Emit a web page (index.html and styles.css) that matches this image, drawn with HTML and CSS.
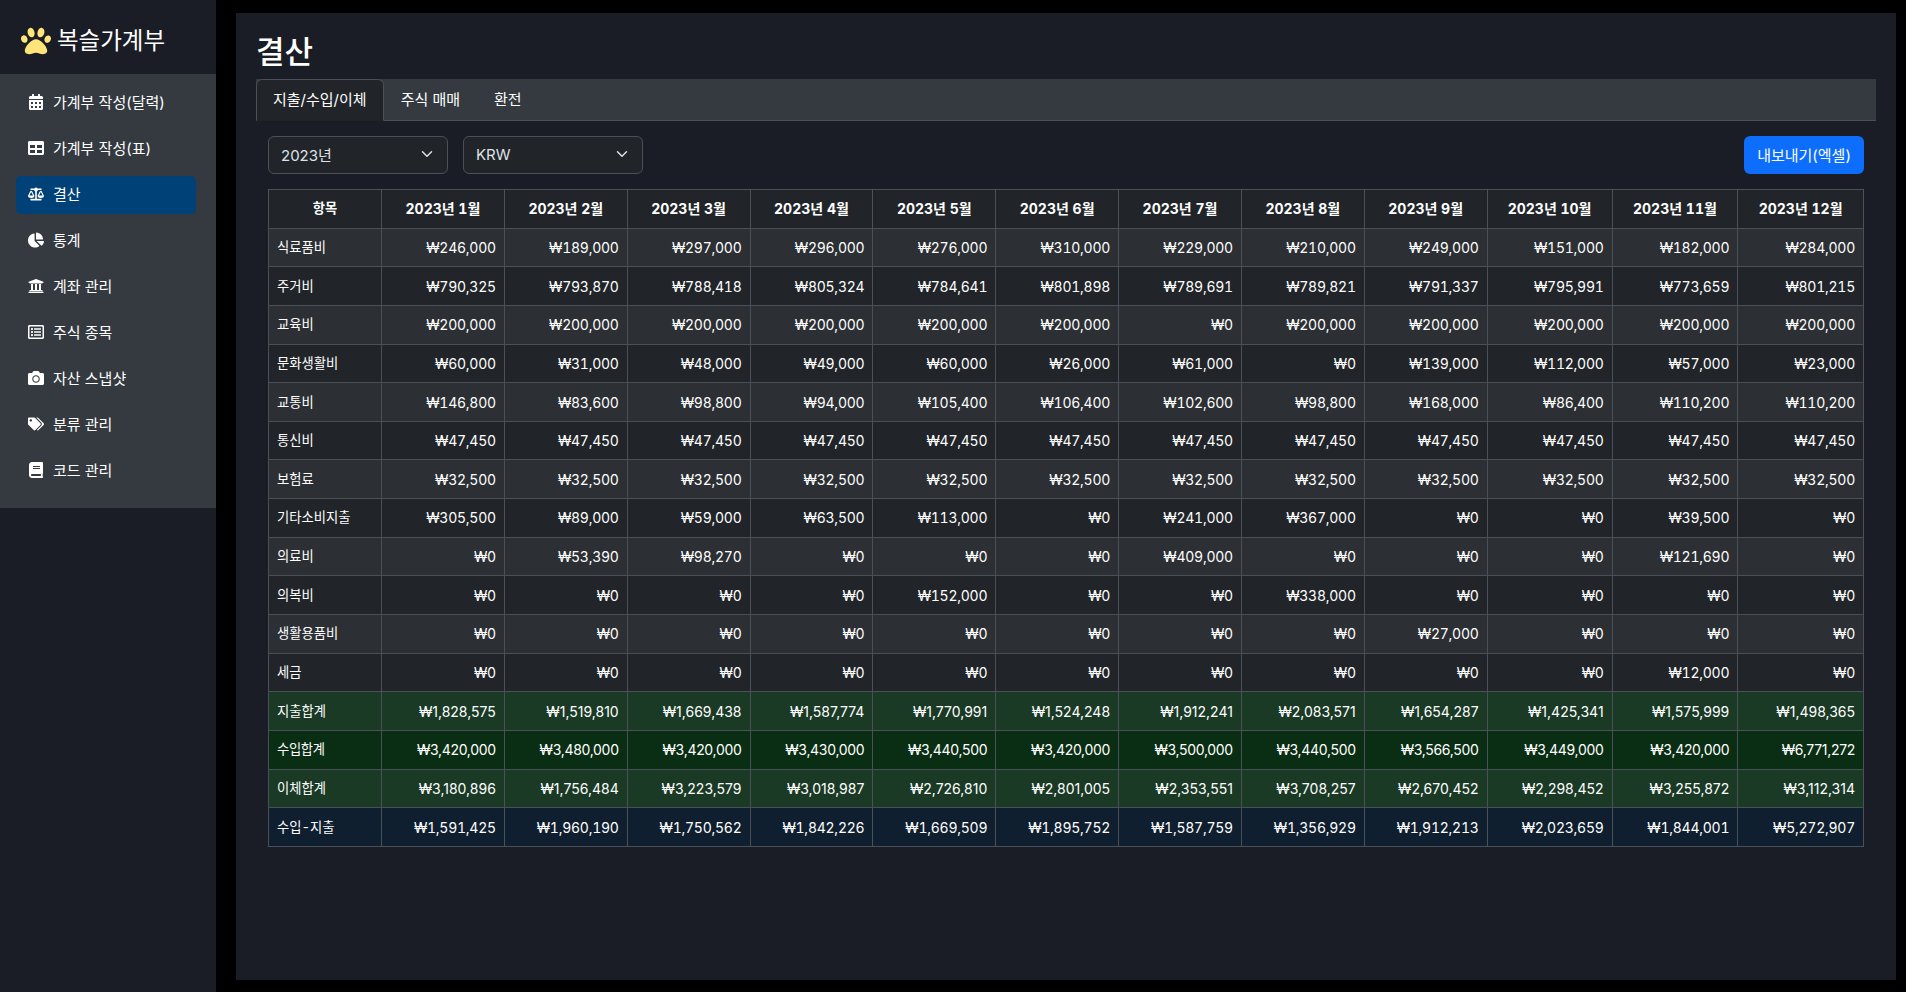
FILE: index.html
```html
<!DOCTYPE html>
<html lang="ko">
<head>
<meta charset="utf-8">
<title>복슬가계부 - 결산</title>
<link rel="stylesheet" href="styles.css">
</head>
<body>
<aside class="sidebar">
  <div class="brand">
    <svg class="paw" viewBox="0 0 512 512"><path d="M256 224c-79.41 0-192 122.76-192 200.25 0 34.9 26.81 55.75 71.74 55.75 48.84 0 81.09-25.08 120.26-25.08 39.51 0 71.85 25.08 120.26 25.08 44.93 0 71.74-20.85 71.74-55.75C448 346.76 335.41 224 256 224zm-147.28-12.61c-10.4-34.65-42.44-57.09-71.56-50.13-29.12 6.96-44.29 40.69-33.89 75.34 10.4 34.65 42.44 57.09 71.56 50.13 29.12-6.96 44.29-40.69 33.89-75.34zm84.72-20.78c30.94-8.14 46.42-49.94 34.58-93.36s-46.52-72.01-77.46-63.87-46.42 49.94-34.58 93.36c11.84 43.42 46.52 72.02 77.46 63.87zm281.39-29.34c-29.12-6.96-61.15 15.48-71.56 50.13-10.4 34.65 4.77 68.38 33.89 75.34 29.12 6.96 61.15-15.48 71.56-50.13 10.4-34.65-4.77-68.38-33.89-75.34zm-156.27 29.34c30.94 8.14 65.62-20.45 77.46-63.87 11.84-43.42-3.64-85.21-34.58-93.36s-65.62 20.45-77.46 63.87c-11.84 43.42 3.64 85.22 34.58 93.36z"/></svg>
    <span>복슬가계부</span>
  </div>
  <nav class="menu">
    <a class="menu-item"><span class="ico"><svg viewBox="0 0 448 512"><path d="M0 464c0 26.5 21.5 48 48 48h352c26.5 0 48-21.5 48-48V192H0v272zm320-196c0-6.6 5.4-12 12-12h40c6.6 0 12 5.4 12 12v40c0 6.6-5.4 12-12 12h-40c-6.6 0-12-5.4-12-12v-40zm0 128c0-6.6 5.4-12 12-12h40c6.6 0 12 5.4 12 12v40c0 6.6-5.4 12-12 12h-40c-6.6 0-12-5.4-12-12v-40zM192 268c0-6.6 5.4-12 12-12h40c6.6 0 12 5.4 12 12v40c0 6.6-5.4 12-12 12h-40c-6.6 0-12-5.4-12-12v-40zm0 128c0-6.6 5.4-12 12-12h40c6.6 0 12 5.4 12 12v40c0 6.6-5.4 12-12 12h-40c-6.6 0-12-5.4-12-12v-40zM64 268c0-6.6 5.4-12 12-12h40c6.6 0 12 5.4 12 12v40c0 6.6-5.4 12-12 12H76c-6.6 0-12-5.4-12-12v-40zm0 128c0-6.6 5.4-12 12-12h40c6.6 0 12 5.4 12 12v40c0 6.6-5.4 12-12 12H76c-6.6 0-12-5.4-12-12v-40zM400 64h-48V16c0-8.8-7.2-16-16-16h-32c-8.8 0-16 7.2-16 16v48H160V16c0-8.8-7.2-16-16-16h-32c-8.8 0-16 7.2-16 16v48H48C21.5 64 0 85.5 0 112v48h448v-48c0-26.5-21.5-48-48-48z"/></svg></span>가계부 작성(달력)</a>
    <a class="menu-item"><span class="ico"><svg viewBox="0 0 512 512"><path d="M464 32H48C21.49 32 0 53.49 0 80v352c0 26.51 21.49 48 48 48h416c26.51 0 48-21.49 48-48V80c0-26.51-21.49-48-48-48zM224 416H64v-96h160v96zm0-160H64v-96h160v96zm224 160H288v-96h160v96zm0-160H288v-96h160v96z"/></svg></span>가계부 작성(표)</a>
    <a class="menu-item active"><span class="ico"><svg viewBox="0 0 640 512"><path d="M256 336h-.02c0-16.18 1.34-8.73-85.05-181.51-17.65-35.29-68.19-35.36-85.87 0C-2.06 328.75.02 320.33.02 336H0c0 44.18 57.31 80 128 80s128-35.82 128-80zM128 176l72 144H56l72-144zm511.98 160c0-16.18 1.34-8.73-85.05-181.51-17.65-35.29-68.19-35.36-85.87 0-87.12 174.26-85.04 165.84-85.04 181.51H384c0 44.18 57.31 80 128 80s128-35.82 128-80h-.02zM440 320l72-144 72 144H440zm88 128H352V153.25c23.51-10.29 41.16-31.48 46.39-57.25H528c8.84 0 16-7.16 16-16V48c0-8.84-7.16-16-16-16H383.64C369.04 12.68 346.09 0 320 0s-49.04 12.68-63.64 32H112c-8.84 0-16 7.16-16 16v32c0 8.84 7.16 16 16 16h129.61c5.23 25.76 22.87 46.96 46.39 57.25V448H112c-8.84 0-16 7.16-16 16v32c0 8.84 7.16 16 16 16h416c8.84 0 16-7.16 16-16v-32c0-8.84-7.16-16-16-16z"/></svg></span>결산</a>
    <a class="menu-item"><span class="ico"><svg viewBox="0 0 544 512"><path d="M527.79 288H290.5l158.03 158.03c6.04 6.04 15.98 6.53 22.19.68 38.7-36.46 65.32-85.61 73.13-140.86 1.34-9.46-6.51-17.85-16.06-17.85zm-15.83-64.8C503.72 103.74 408.26 8.28 288.8.04 279.68-.59 272 7.1 272 16.24V240h223.77c9.14 0 16.82-7.68 16.19-16.8zM224 288V50.71c0-9.55-8.39-17.4-17.84-16.06C86.99 51.49-4.1 155.6.14 280.37 4.5 408.51 114.83 513.59 243.03 511.98c50.4-.63 96.97-16.87 135.26-44.03 7.9-5.6 8.42-17.23 1.57-24.08L224 288z"/></svg></span>통계</a>
    <a class="menu-item"><span class="ico"><svg viewBox="0 0 512 512"><path d="M496 128v16a8 8 0 0 1-8 8h-24v12c0 6.627-5.373 12-12 12H60c-6.627 0-12-5.373-12-12v-12H24a8 8 0 0 1-8-8v-16a8 8 0 0 1 4.941-7.392l232-88a7.996 7.996 0 0 1 6.118 0l232 88A8 8 0 0 1 496 128zm-24 304H40c-13.255 0-24 10.745-24 24v16a8 8 0 0 0 8 8h464a8 8 0 0 0 8-8v-16c0-13.255-10.745-24-24-24zM96 192v192H60c-6.627 0-12 5.373-12 12v20h416v-20c0-6.627-5.373-12-12-12h-36V192h-64v192h-64V192h-64v192h-64V192H96z"/></svg></span>계좌 관리</a>
    <a class="menu-item"><span class="ico"><svg viewBox="0 0 512 512"><path d="M464 32H48C21.49 32 0 53.49 0 80v352c0 26.51 21.49 48 48 48h416c26.51 0 48-21.49 48-48V80c0-26.51-21.49-48-48-48zm-6 400H54a6 6 0 0 1-6-6V86a6 6 0 0 1 6-6h404a6 6 0 0 1 6 6v340a6 6 0 0 1-6 6zm-42-92v24c0 6.627-5.373 12-12 12H204c-6.627 0-12-5.373-12-12v-24c0-6.627 5.373-12 12-12h200c6.627 0 12 5.373 12 12zm0-96v24c0 6.627-5.373 12-12 12H204c-6.627 0-12-5.373-12-12v-24c0-6.627 5.373-12 12-12h200c6.627 0 12 5.373 12 12zm0-96v24c0 6.627-5.373 12-12 12H204c-6.627 0-12-5.373-12-12v-24c0-6.627 5.373-12 12-12h200c6.627 0 12 5.373 12 12zm-252 12c0 19.882-16.118 36-36 36s-36-16.118-36-36 16.118-36 36-36 36 16.118 36 36zm0 96c0 19.882-16.118 36-36 36s-36-16.118-36-36 16.118-36 36-36 36 16.118 36 36zm0 96c0 19.882-16.118 36-36 36s-36-16.118-36-36 16.118-36 36-36 36 16.118 36 36z"/></svg></span>주식 종목</a>
    <a class="menu-item"><span class="ico"><svg viewBox="0 0 512 512"><path d="M512 144v288c0 26.5-21.5 48-48 48H48c-26.5 0-48-21.5-48-48V144c0-26.5 21.5-48 48-48h88l12.3-32.9c7-18.7 24.9-31.1 44.9-31.1h125.5c20 0 37.9 12.4 44.9 31.1L376 96h88c26.5 0 48 21.5 48 48zM376 288c0-66.2-53.8-120-120-120s-120 53.8-120 120 53.8 120 120 120 120-53.8 120-120zm-32 0c0 48.5-39.5 88-88 88s-88-39.5-88-88 39.5-88 88-88 88 39.5 88 88z"/></svg></span>자산 스냅샷</a>
    <a class="menu-item"><span class="ico"><svg viewBox="0 0 640 512"><path d="M497.941 225.941L286.059 14.059A48 48 0 0 0 252.118 0H48C21.49 0 0 21.49 0 48v204.118a48 48 0 0 0 14.059 33.941l211.882 211.882c18.744 18.745 49.136 18.746 67.882 0l204.118-204.118c18.745-18.745 18.745-49.137 0-67.882zM112 160c-26.51 0-48-21.49-48-48s21.49-48 48-48 48 21.49 48 48-21.49 48-48 48zm513.941 133.823L421.823 497.941c-18.745 18.745-49.137 18.745-67.882 0l-.36-.36L527.64 323.522c16.999-16.999 26.36-39.6 26.36-63.64s-9.362-46.641-26.36-63.64L331.397 0h48.721a48 48 0 0 1 33.941 14.059l211.882 211.882c18.745 18.745 18.745 49.137 0 67.882z"/></svg></span>분류 관리</a>
    <a class="menu-item"><span class="ico"><svg viewBox="0 0 448 512"><path d="M448 360V24c0-13.3-10.7-24-24-24H96C43 0 0 43 0 96v320c0 53 43 96 96 96h328c13.3 0 24-10.7 24-24v-16c0-7.5-3.5-14.3-8.9-18.7-4.2-15.4-4.2-59.3 0-74.7 5.4-4.3 8.9-11.1 8.9-18.6zM128 134c0-3.3 2.7-6 6-6h212c3.3 0 6 2.7 6 6v20c0 3.3-2.7 6-6 6H134c-3.3 0-6-2.7-6-6v-20zm0 64c0-3.3 2.7-6 6-6h212c3.3 0 6 2.7 6 6v20c0 3.3-2.7 6-6 6H134c-3.3 0-6-2.7-6-6v-20zm253.4 250H96c-17.7 0-32-14.3-32-32 0-17.6 14.4-32 32-32h285.4c-1.9 17.1-1.9 46.9 0 64z"/></svg></span>코드 관리</a>
  </nav>
</aside>
<main class="content">
  <h1 class="title">결산</h1>
  <div class="tabs">
    <a class="tab active">지출/수입/이체</a>
    <a class="tab">주식 매매</a>
    <a class="tab">환전</a>
  </div>
  <section class="panel">
    <div class="toolbar">
      <div class="select">2023년<svg class="chev" viewBox="0 0 16 16"><path d="M2 5l6 6 6-6"/></svg></div>
      <div class="select">KRW<svg class="chev" viewBox="0 0 16 16"><path d="M2 5l6 6 6-6"/></svg></div>
      <button class="export">내보내기(엑셀)</button>
    </div>
    <table class="report">
      <colgroup>
        <col class="col-label">
        <col class="col-month" span="9">
        <col class="col-oct">
        <col class="col-nov">
        <col>
      </colgroup>
      <thead>
        <tr><th>항목</th><th>2023년 1월</th><th>2023년 2월</th><th>2023년 3월</th><th>2023년 4월</th><th>2023년 5월</th><th>2023년 6월</th><th>2023년 7월</th><th>2023년 8월</th><th>2023년 9월</th><th>2023년 10월</th><th>2023년 11월</th><th>2023년 12월</th></tr>
      </thead>
      <tbody>
        <tr class="odd"><td>식료품비</td><td>₩246,000</td><td>₩189,000</td><td>₩297,000</td><td>₩296,000</td><td>₩276,000</td><td>₩310,000</td><td>₩229,000</td><td>₩210,000</td><td>₩249,000</td><td>₩151,000</td><td>₩182,000</td><td>₩284,000</td></tr>
        <tr><td>주거비</td><td>₩790,325</td><td>₩793,870</td><td>₩788,418</td><td>₩805,324</td><td>₩784,641</td><td>₩801,898</td><td>₩789,691</td><td>₩789,821</td><td>₩791,337</td><td>₩795,991</td><td>₩773,659</td><td>₩801,215</td></tr>
        <tr class="odd"><td>교육비</td><td>₩200,000</td><td>₩200,000</td><td>₩200,000</td><td>₩200,000</td><td>₩200,000</td><td>₩200,000</td><td>₩0</td><td>₩200,000</td><td>₩200,000</td><td>₩200,000</td><td>₩200,000</td><td>₩200,000</td></tr>
        <tr><td>문화생활비</td><td>₩60,000</td><td>₩31,000</td><td>₩48,000</td><td>₩49,000</td><td>₩60,000</td><td>₩26,000</td><td>₩61,000</td><td>₩0</td><td>₩139,000</td><td>₩112,000</td><td>₩57,000</td><td>₩23,000</td></tr>
        <tr class="odd"><td>교통비</td><td>₩146,800</td><td>₩83,600</td><td>₩98,800</td><td>₩94,000</td><td>₩105,400</td><td>₩106,400</td><td>₩102,600</td><td>₩98,800</td><td>₩168,000</td><td>₩86,400</td><td>₩110,200</td><td>₩110,200</td></tr>
        <tr><td>통신비</td><td>₩47,450</td><td>₩47,450</td><td>₩47,450</td><td>₩47,450</td><td>₩47,450</td><td>₩47,450</td><td>₩47,450</td><td>₩47,450</td><td>₩47,450</td><td>₩47,450</td><td>₩47,450</td><td>₩47,450</td></tr>
        <tr class="odd"><td>보험료</td><td>₩32,500</td><td>₩32,500</td><td>₩32,500</td><td>₩32,500</td><td>₩32,500</td><td>₩32,500</td><td>₩32,500</td><td>₩32,500</td><td>₩32,500</td><td>₩32,500</td><td>₩32,500</td><td>₩32,500</td></tr>
        <tr><td>기타소비지출</td><td>₩305,500</td><td>₩89,000</td><td>₩59,000</td><td>₩63,500</td><td>₩113,000</td><td>₩0</td><td>₩241,000</td><td>₩367,000</td><td>₩0</td><td>₩0</td><td>₩39,500</td><td>₩0</td></tr>
        <tr class="odd"><td>의료비</td><td>₩0</td><td>₩53,390</td><td>₩98,270</td><td>₩0</td><td>₩0</td><td>₩0</td><td>₩409,000</td><td>₩0</td><td>₩0</td><td>₩0</td><td>₩121,690</td><td>₩0</td></tr>
        <tr><td>의복비</td><td>₩0</td><td>₩0</td><td>₩0</td><td>₩0</td><td>₩152,000</td><td>₩0</td><td>₩0</td><td>₩338,000</td><td>₩0</td><td>₩0</td><td>₩0</td><td>₩0</td></tr>
        <tr class="odd"><td>생활용품비</td><td>₩0</td><td>₩0</td><td>₩0</td><td>₩0</td><td>₩0</td><td>₩0</td><td>₩0</td><td>₩0</td><td>₩27,000</td><td>₩0</td><td>₩0</td><td>₩0</td></tr>
        <tr><td>세금</td><td>₩0</td><td>₩0</td><td>₩0</td><td>₩0</td><td>₩0</td><td>₩0</td><td>₩0</td><td>₩0</td><td>₩0</td><td>₩0</td><td>₩12,000</td><td>₩0</td></tr>
        <tr class="sum"><td>지출합계</td><td>₩1,828,575</td><td>₩1,519,810</td><td>₩1,669,438</td><td>₩1,587,774</td><td>₩1,770,991</td><td>₩1,524,248</td><td>₩1,912,241</td><td>₩2,083,571</td><td>₩1,654,287</td><td>₩1,425,341</td><td>₩1,575,999</td><td>₩1,498,365</td></tr>
        <tr class="sum-dark"><td>수입합계</td><td>₩3,420,000</td><td>₩3,480,000</td><td>₩3,420,000</td><td>₩3,430,000</td><td>₩3,440,500</td><td>₩3,420,000</td><td>₩3,500,000</td><td>₩3,440,500</td><td>₩3,566,500</td><td>₩3,449,000</td><td>₩3,420,000</td><td>₩6,771,272</td></tr>
        <tr class="sum"><td>이체합계</td><td>₩3,180,896</td><td>₩1,756,484</td><td>₩3,223,579</td><td>₩3,018,987</td><td>₩2,726,810</td><td>₩2,801,005</td><td>₩2,353,551</td><td>₩3,708,257</td><td>₩2,670,452</td><td>₩2,298,452</td><td>₩3,255,872</td><td>₩3,112,314</td></tr>
        <tr class="net"><td>수입-지출</td><td>₩1,591,425</td><td>₩1,960,190</td><td>₩1,750,562</td><td>₩1,842,226</td><td>₩1,669,509</td><td>₩1,895,752</td><td>₩1,587,759</td><td>₩1,356,929</td><td>₩1,912,213</td><td>₩2,023,659</td><td>₩1,844,001</td><td>₩5,272,907</td></tr>
      </tbody>
    </table>
  </section>
</main>
</body>
</html>
```
FILE: styles.css
```css
* { box-sizing: border-box; }
html, body { height: 100%; }
body {
  margin: 0;
  display: flex;
  background: #000;
  color: #dee2e6;
  font-family: Inter, "Noto Sans CJK KR", sans-serif;
  font-size: 15px;
  overflow: hidden;
}
.sidebar {
  width: 216px;
  flex: none;
  background: #1a1d25;
  color: #fff;
}
.brand {
  height: 74px;
  padding: 8px 0 0 21px;
  display: flex;
  align-items: center;
  gap: 6px;
  font-size: 23.5px;
  line-height: 36px;
}
.paw { width: 30px; height: 30px; fill: #ffe479; flex: none; }
.menu {
  background: #343a40;
  padding: 10px 20px 18px 16px;
  display: flex;
  flex-direction: column;
  gap: 8px;
}
.menu-item {
  height: 38px;
  display: flex;
  align-items: center;
  padding: 0 0 3px 12px;
  border-radius: 5px;
  font-size: 15px;
  color: #fff;
}
.menu-item.active { background: #004178; }
.ico { width: 25px; flex: none; display: flex; }
.ico svg { width: 16px; height: 16px; fill: #fff; }
.content {
  flex: 1;
  min-width: 0;
  margin: 13px 10px 12px 20px;
  background: #1a1d25;
  padding: 0 20px;
}
.title {
  margin: 0;
  height: 66px;
  padding-top: 12px;
  font-size: 31px;
  font-weight: 500;
  line-height: 54px;
  color: #fff;
}
.tabs {
  display: flex;
  height: 42px;
  background: #343a40;
  border-bottom: 1px solid #495057;
}
.tab {
  height: 42px;
  padding: 8px 16px;
  font-size: 15px;
  line-height: 24px;
  color: #fff;
  border: 1px solid transparent;
}
.tab.active {
  background: #212529;
  border-color: #495057;
  border-bottom-color: #212529;
  border-radius: 6px 6px 0 0;
}
.panel { padding: 15px 12px; }
.toolbar { display: flex; gap: 15px; margin-bottom: 15px; }
.select {
  width: 180px;
  height: 38px;
  padding: 0 14px 2px 12px;
  display: flex;
  align-items: center;
  justify-content: space-between;
  background: #212529;
  border: 1px solid #495057;
  border-radius: 6px;
  color: #dee2e6;
  font-size: 15px;
}
.chev { width: 12px; height: 12px; fill: none; stroke: #dee2e6; stroke-width: 2; stroke-linecap: round; stroke-linejoin: round; }
.export {
  margin-left: auto;
  width: 120px;
  height: 38px;
  padding: 0 0 2px;
  border: 0;
  border-radius: 6px;
  background: #0d6efd;
  color: #fff;
  font: inherit;
}
.report {
  width: 100%;
  table-layout: fixed;
  border-collapse: collapse;
  font-size: 14px;
  line-height: 21px;
  color: #fff;
  font-variant-numeric: tabular-nums;
}
.col-label { width: 113px; }
.col-month { width: 122.85px; }
.col-oct { width: 125px; }
.col-nov { width: 125.7px; }
.report th, .report td {
  border: 1px solid #495057;
  height: 38.65px;
  padding: 0 8px;
  background: #212529;
  white-space: nowrap;
}
.report th { font-weight: 700; text-align: center; }
.report td { text-align: right; letter-spacing: -0.25px; }
.report td:first-child { text-align: left; font-size: 13.3px; letter-spacing: 0; }
.report th:first-child { font-size: 13.3px; }
.report .odd td { background: #2c3034; }
.report .sum td { background: #1a3a26; font-variant-numeric: normal; letter-spacing: 0; }
.report .sum-dark td { background: #0a2e14; font-variant-numeric: normal; letter-spacing: -0.3px; }
.report .net td { background: #0f1f30; }
```
